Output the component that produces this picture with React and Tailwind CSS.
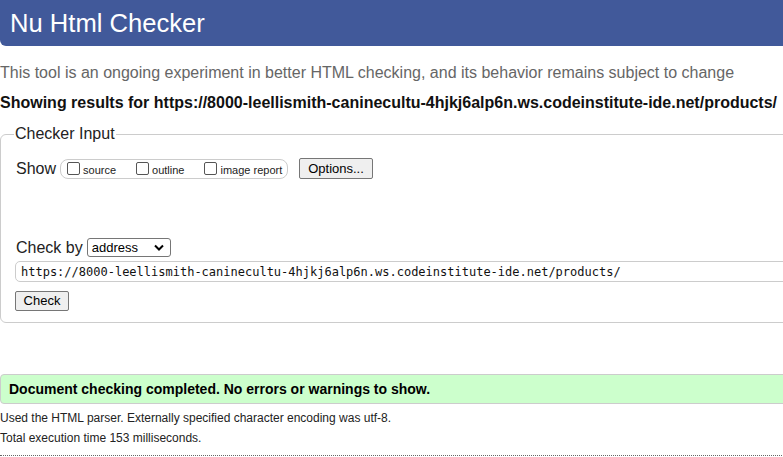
import React from 'react'

const url = 'https://8000-leellismith-caninecultu-4hjkj6alp6n.ws.codeinstitute-ide.net/products/'

function Box({ label }) {
  return (
    <span className="flex items-center">
      <span className="w-[13px] h-[13px] border border-[#555] rounded-[2px] bg-white" />
      <span className="ml-[3px] text-[11px] leading-[13px] mt-[3px] text-[#222]">{label}</span>
    </span>
  )
}

function Button({ children, className = '' }) {
  return (
    <span
      className={
        'flex items-center justify-center bg-[#efefef] border border-[#767676] rounded-[2px] text-[13px] text-black ' +
        className
      }
    >
      {children}
    </span>
  )
}

export default function App() {
  return (
    <div className="w-full overflow-hidden bg-white" style={{ fontFamily: '"Liberation Sans", Arial, sans-serif' }}>
      <div className="w-[810px]">
        {/* title bar */}
        <div className="h-[46px] bg-[#41599a] rounded-bl-[6px] flex items-center pl-[10px]">
          <h1 className="text-[25.6px] leading-[30px] text-white">Nu Html Checker</h1>
        </div>

        <p className="mt-[18px] text-[16px] leading-[18px] text-[#666]">
          This tool is an ongoing experiment in better HTML checking, and its behavior remains subject to change
        </p>
        <p className="mt-[12px] text-[16px] leading-[18px] font-bold text-[#111]">Showing results for {url}</p>

        {/* checker input */}
        <fieldset className="mt-[13px] border border-[#ccc] rounded-[6px] pl-[13px] pt-[15px] pb-[11px]">
          <legend className="px-[1px] text-[16px] leading-[18px] text-[#222]">Checker Input</legend>

          <div className="flex items-center h-[21px] pl-[2px]">
            <span className="text-[16px] leading-[18px] text-[#222]">Show</span>
            <span className="ml-[4px] h-[20px] w-[228px] border border-[#ccc] rounded-[8px] flex items-center pl-[6px] gap-[20px]">
              <Box label="source" />
              <Box label="outline" />
              <Box label="image report" />
            </span>
            <Button className="ml-[11px] h-[21px] w-[74px]">Options...</Button>
          </div>

          <div className="mt-[59px] flex items-center h-[19px] pl-[2px]">
            <span className="text-[16px] leading-[18px] text-[#222]">Check by</span>
            <span className="ml-[4px] h-[19px] w-[84px] border border-[#767676] rounded-[3px] flex items-center justify-between pl-[4px] pr-[6px] text-[13px] text-black">
              address
              <svg width="10" height="7" viewBox="0 0 10 7">
                <path d="M1 1.5 L5 5.5 L9 1.5" fill="none" stroke="#000" strokeWidth="2" />
              </svg>
            </span>
          </div>

          <div className="mt-[4px] ml-[1px] h-[21px] border border-[#ccc] rounded-[5px] flex items-center pl-[5px]">
            <span className="text-[12px] text-[#111]" style={{ fontFamily: '"DejaVu Sans Mono", "Liberation Mono", monospace' }}>
              {url}
            </span>
          </div>

          <div className="mt-[9px] ml-[1px] flex">
            <Button className="h-[20px] w-[54px]">Check</Button>
          </div>
        </fieldset>

        {/* result */}
        <div className="mt-[51px] h-[30px] bg-[#ccffcc] border border-[#ccc] rounded-l-[4px] flex items-center pl-[8px]">
          <span className="text-[14px] font-bold text-black">Document checking completed. No errors or warnings to show.</span>
        </div>
        <p className="mt-[7px] text-[12px] leading-[14px] text-[#222]">
          Used the HTML parser. Externally specified character encoding was utf-8.
        </p>
        <p className="mt-[6px] text-[12px] leading-[14px] text-[#222]">Total execution time 153 milliseconds.</p>
        <div className="mt-[10px] border-b border-dotted border-[#666]" />
      </div>
    </div>
  )
}
